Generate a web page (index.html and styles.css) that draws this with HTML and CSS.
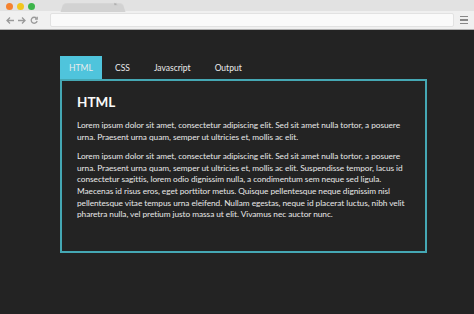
FILE: index.html
```html
<!DOCTYPE html>
<html>
<head>
<meta charset="utf-8">
<link rel="stylesheet" href="styles.css">
</head>
<body>
<div class="chrome">
  <div class="tabstrip">
    <div class="dots"><span class="dot red"></span><span class="dot yellow"></span><span class="dot green"></span></div>
    <div class="btab"><span class="bx">×</span></div>
  </div>
  <div class="toolbar">
    <div class="navs">
      <svg width="34" height="9" viewBox="0 0 34 9"><g fill="none" stroke="#9a9a9a" stroke-width="1.3"><path d="M1 4.5h7M4 1.5l-3 3 3 3"/><path d="M12 4.5h7M16 1.5l3 3-3 3"/><path d="M30.5 2.3a3 3 0 1 0 .6 2.7"/><path d="M31.2 0.8v2.2h-2.2"/></g></svg>
    </div>
    <div class="address"></div>
    <div class="menu"><span></span><span></span><span></span></div>
  </div>
</div>
<div class="page">
  <div class="tabs">
    <div class="tab active">HTML</div>
    <div class="tab">CSS</div>
    <div class="tab">Javascript</div>
    <div class="tab">Output</div>
  </div>
  <div class="panel">
    <h1>HTML</h1>
    <p>Lorem ipsum dolor sit amet, consectetur adipiscing elit. Sed sit amet nulla tortor, a posuere urna. Praesent urna quam, semper ut ultricies et, mollis ac elit.</p>
    <p>Lorem ipsum dolor sit amet, consectetur adipiscing elit. Sed sit amet nulla tortor, a posuere urna. Praesent urna quam, semper ut ultricies et, mollis ac elit. Suspendisse tempor, lacus id consectetur sagittis, lorem odio dignissim nulla, a condimentum sem neque sed ligula. Maecenas id risus eros, eget porttitor metus. Quisque pellentesque neque dignissim nisl pellentesque vitae tempus urna eleifend. Nullam egestas, neque id placerat luctus, nibh velit pharetra nulla, vel pretium justo massa ut elit. Vivamus nec auctor nunc.</p>
  </div>
</div>
</body>
</html>
```
FILE: styles.css
```css
* { box-sizing: border-box; }
html, body { margin: 0; padding: 0; }
body {
  width: 474px;
  height: 314px;
  overflow: hidden;
  background: #232323;
  font-family: Lato, "Open Sans", "Liberation Sans", sans-serif;
}
.chrome {
  background: #e2e2e2;
  height: 30px;
  border-bottom: 1px solid #b0b0b0;
}
.tabstrip {
  height: 11px;
  display: flex;
  align-items: center;
  padding-left: 6px;
  position: relative;
}
.dots { display: flex; gap: 4px; padding-top: 2px; }
.dot { width: 7px; height: 7px; border-radius: 50%; display: block; }
.red { background: #f5822f; }
.yellow { background: #f2c61d; }
.green { background: #3cb44a; }
.btab {
  margin-left: 27px;
  margin-top: 3px;
  width: 62px;
  height: 9px;
  background: #d2d2d2;
  border-radius: 3px 3px 0 0;
  transform: perspective(20px) rotateX(12deg);
  position: relative;
}
.bx { position: absolute; right: 6px; top: -3px; font-size: 6px; color: #888; }
.toolbar {
  height: 18px;
  background: #f0f0f0;
  display: flex;
  align-items: center;
  padding: 0 4px 0 6px;
}
.navs { width: 44px; display: flex; align-items: center; }
.address {
  flex: 1;
  height: 14px;
  background: #fafafa;
  border: 1px solid #e2e2e2;
  border-radius: 2px;
}
.menu {
  width: 16px;
  display: flex;
  flex-direction: column;
  align-items: center;
  gap: 2px;
  padding-left: 4px;
}
.menu span { display: block; width: 8px; height: 1.5px; background: #888; }
.page {
  padding: 26px 0 0 60px;
}
.tabs {
  display: flex;
  height: 23px;
  align-items: stretch;
}
.tab {
  color: #ececec;
  font-size: 8.5px;
  display: flex;
  align-items: center;
  padding: 0 12px;
}
.tab.active {
  background: #4fc4dc;
  width: 42px;
  justify-content: center;
  padding: 0;
  margin-right: 1px;
}
.panel {
  width: 367px;
  height: 174px;
  border: 2px solid #45a8b4;
  padding: 13px 16px 0 15px;
  color: #e8e8e8;
}
h1 {
  margin: 0 0 10px 0;
  font-size: 13.5px;
  font-weight: 700;
  color: #fafafa;
  line-height: 16px;
}
p {
  margin: 0 0 8px 0;
  font-size: 8.3px;
  letter-spacing: -0.05px;
  line-height: 11.6px;
}
```
